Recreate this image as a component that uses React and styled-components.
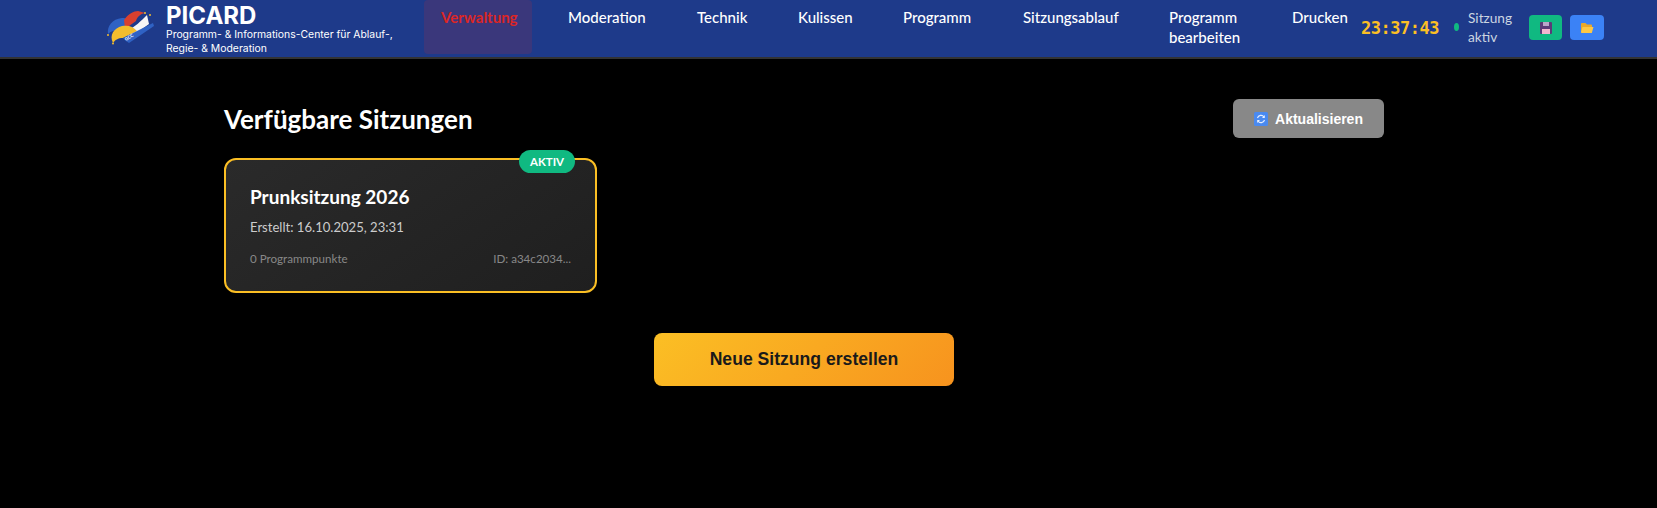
import styled, { createGlobalStyle } from "styled-components";

const GlobalStyle = createGlobalStyle`
  html, body {
    margin: 0;
    padding: 0;
    background: #000;
  }
  body {
    font-family: Lato, "Noto Sans", sans-serif;
  }
`;

const Page = styled.div`
  width: 1657px;
  height: 508px;
  background: #000;
  overflow: hidden;
`;

const Header = styled.header`
  height: 57px;
  padding: 0 53px 0 105px;
  display: flex;
  align-items: flex-start;
  background: #1e3a8a;
  border-bottom: 2px solid #333;
`;

const Brand = styled.div`
  width: 319px;
  flex: none;
  display: flex;
  align-items: flex-start;
  gap: 8px;
  padding-top: 3px;
`;

const LogoBox = styled.svg`
  width: 53px;
  height: 50px;
  flex: none;
  margin-top: 1px;
`;

const BrandText = styled.div`
  font-family: Inter, sans-serif;
  color: #fff;
`;

const BrandName = styled.div`
  font-size: 24px;
  font-weight: 700;
  line-height: 25px;
`;

const BrandSub = styled.div`
  font-size: 10.4px;
  line-height: 14px;
  width: 240px;
`;

const Nav = styled.nav`
  display: flex;
  gap: 19px;
  flex: none;
`;

const NavItem = styled.a`
  box-sizing: border-box;
  width: ${(p) => p.$w}px;
  height: 54px;
  padding: 7px 17px 0;
  font-size: 15px;
  font-weight: ${(p) => (p.$active ? 700 : 500)};
  line-height: 20px;
  color: ${(p) => (p.$active ? "#dc2626" : "#fff")};
  background: ${(p) => (p.$active ? "rgba(220, 38, 38, 0.15)" : "transparent")};
  border-radius: 4px;
`;

const Clock = styled.div`
  margin: 17px 0 0 -2px;
  width: 93px;
  flex: none;
  font-family: "DejaVu Sans Mono", monospace;
  font-weight: 700;
  font-size: 17px;
  line-height: 22px;
  letter-spacing: -0.5px;
  color: #fbbf24;
`;

const Status = styled.div`
  display: flex;
  align-items: center;
  gap: 9px;
  width: 75px;
  flex: none;
  height: 54px;
`;

const StatusDot = styled.span`
  width: 5px;
  height: 8px;
  border-radius: 50%;
  background: #10b981;
  flex: none;
`;

const StatusText = styled.span`
  font-size: 13.7px;
  line-height: 19px;
  color: #cbd5e1;
  width: 50px;
`;

const HeaderActions = styled.div`
  display: flex;
  gap: 8px;
  margin-top: 15px;
`;

const IconButton = styled.button`
  width: ${(p) => p.$w}px;
  height: 25px;
  padding: 0;
  border: none;
  border-radius: 4px;
  display: flex;
  align-items: center;
  justify-content: center;
  background: ${(p) => p.$bg};
`;

const Main = styled.main`
  padding: 40px 273px 0 224px;
`;

const TitleRow = styled.div`
  display: flex;
  justify-content: space-between;
  align-items: center;
  height: 39px;
  margin-bottom: 20px;
`;

const Title = styled.h2`
  margin: 0;
  font-size: 26px;
  font-weight: 700;
  color: #fff;
`;

const RefreshButton = styled.button`
  width: 151px;
  height: 39px;
  border: none;
  border-radius: 6px;
  display: flex;
  align-items: center;
  justify-content: center;
  gap: 7px;
  background: #888;
  color: #fff;
  font-family: "Liberation Sans", Arial, sans-serif;
  font-size: 14px;
  font-weight: 700;
`;

const SessionCard = styled.div`
  position: relative;
  box-sizing: border-box;
  width: 373px;
  height: 135px;
  padding: 25px 24px 0;
  background: linear-gradient(145deg, #2a2a2a, #1f1f1f);
  border: 2px solid #fbbf24;
  border-radius: 12px;
`;

const ActiveBadge = styled.span`
  position: absolute;
  top: -10px;
  right: 20px;
  width: 56px;
  height: 23px;
  border-radius: 12px;
  display: flex;
  align-items: center;
  justify-content: center;
  background: #10b981;
  color: #fff;
  font-size: 11.5px;
  font-weight: 700;
`;

const SessionName = styled.h3`
  margin: 0 0 9px;
  font-size: 19px;
  line-height: 24px;
  font-weight: 700;
  color: #fff;
`;

const SessionDate = styled.p`
  margin: 0 0 15px;
  font-size: 13.1px;
  line-height: 18px;
  color: #ccc;
`;

const SessionMeta = styled.div`
  display: flex;
  justify-content: space-between;
  font-size: 11.6px;
  line-height: 16px;
  color: #888;
`;

const CreateRow = styled.div`
  display: flex;
  justify-content: center;
  margin-top: 40px;
`;

const CreateButton = styled.button`
  width: 300px;
  height: 53px;
  border: none;
  border-radius: 8px;
  background: linear-gradient(135deg, #fbbf24, #f7931e);
  color: #1a1a1a;
  font-family: "Liberation Sans", Arial, sans-serif;
  font-size: 17.6px;
  font-weight: 700;
`;

// viewBox is in page coordinates so the shapes can be read off the screenshot
const JesterLogo = () => (
  <LogoBox viewBox="105 4 53 50">
    <path d="M108 34 C107 26 112 19 122 18 C127 18 130 19 132 22 L120 30 C115 30 111 31 108 34Z" fill="#2f62c4" />
    <path d="M124 20 C128 14 134 11 138 11 L145 13 C140 14 137 17 136 21 L125 29Z" fill="#d9402f" />
    <path d="M128 30 C135 27 141 21 147 15 L149 24 L131 37Z" fill="#f6f6f6" />
    <path d="M113 43 C109 35 114 28 122 26 C128 25 133 26 137 31 L123 38 C118 38 115 40 113 43Z" fill="#f3bd2e" />
    <path d="M123 38 L153 23 L154 26 L129 43 C127 42 125 40 123 38Z" fill="#2f62c4" />
    <text x="0" y="0" fontSize="4.5" fontWeight="700" fill="#fff" transform="translate(126 41) rotate(-32)">
      GCC
    </text>
    <circle cx="108" cy="35" r="1" fill="#f3bd2e" />
    <circle cx="113" cy="43.5" r="1" fill="#f3bd2e" />
    <circle cx="145" cy="13" r="1" fill="#f3bd2e" />
    <circle cx="150" cy="15" r="1" fill="#f3bd2e" />
  </LogoBox>
);

const FloppyIcon = () => (
  <svg width="14" height="14" viewBox="0 0 14 14">
    <rect x="1" y="1" width="12" height="12" rx="1" fill="#5b3a78" />
    <rect x="4" y="1" width="6" height="4" fill="#b9a6c9" />
    <rect x="3" y="8" width="8" height="5" fill="#f4b6cf" />
  </svg>
);

const FolderIcon = () => (
  <svg width="14" height="12" viewBox="0 0 14 12">
    <path d="M1 2 Q1 1 2 1 H5.5 L7 2.5 H11 Q12 2.5 12 3.5 V10 Q12 11 11 11 H2 Q1 11 1 10Z" fill="#e9a82a" />
    <path d="M2.5 5 H13.5 L11.8 11 H1.5 L1 10Z" fill="#fcc846" />
  </svg>
);

const RefreshIcon = () => (
  <svg width="14" height="14" viewBox="0 0 14 14">
    <rect width="14" height="14" rx="1.5" fill="#4a8af0" />
    <path d="M3.5 6 A3.6 3.6 0 0 1 10 5" fill="none" stroke="#e8f0ff" strokeWidth="1.1" />
    <path d="M10.5 8 A3.6 3.6 0 0 1 4 9" fill="none" stroke="#e8f0ff" strokeWidth="1.1" />
    <path d="M10.8 3 V6 H8Z M3.2 11 V8 H6Z" fill="#e8f0ff" />
  </svg>
);

const navItems = [
  { label: "Verwaltung", w: 108, active: true },
  { label: "Moderation", w: 110 },
  { label: "Technik", w: 82 },
  { label: "Kulissen", w: 86 },
  { label: "Programm", w: 101 },
  { label: "Sitzungsablauf", w: 127 },
  { label: "Programm bearbeiten", w: 104 },
  { label: "Drucken", w: 88 },
];

export default function App() {
  return (
    <Page>
      <GlobalStyle />
      <Header>
        <Brand>
          <JesterLogo />
          <BrandText>
            <BrandName>PICARD</BrandName>
            <BrandSub>Programm- &amp; Informations-Center für Ablauf-, Regie- &amp; Moderation</BrandSub>
          </BrandText>
        </Brand>
        <Nav>
          {navItems.map((item) => (
            <NavItem key={item.label} $w={item.w} $active={item.active}>
              {item.label}
            </NavItem>
          ))}
        </Nav>
        <Clock>23:37:43</Clock>
        <Status>
          <StatusDot />
          <StatusText>Sitzung aktiv</StatusText>
        </Status>
        <HeaderActions>
          <IconButton $w={33} $bg="#10b981">
            <FloppyIcon />
          </IconButton>
          <IconButton $w={34} $bg="#3b82f6">
            <FolderIcon />
          </IconButton>
        </HeaderActions>
      </Header>
      <Main>
        <TitleRow>
          <Title>Verfügbare Sitzungen</Title>
          <RefreshButton>
            <RefreshIcon />
            Aktualisieren
          </RefreshButton>
        </TitleRow>
        <SessionCard>
          <ActiveBadge>AKTIV</ActiveBadge>
          <SessionName>Prunksitzung 2026</SessionName>
          <SessionDate>Erstellt: 16.10.2025, 23:31</SessionDate>
          <SessionMeta>
            <span>0 Programmpunkte</span>
            <span>ID: a34c2034...</span>
          </SessionMeta>
        </SessionCard>
        <CreateRow>
          <CreateButton>Neue Sitzung erstellen</CreateButton>
        </CreateRow>
      </Main>
    </Page>
  );
}
